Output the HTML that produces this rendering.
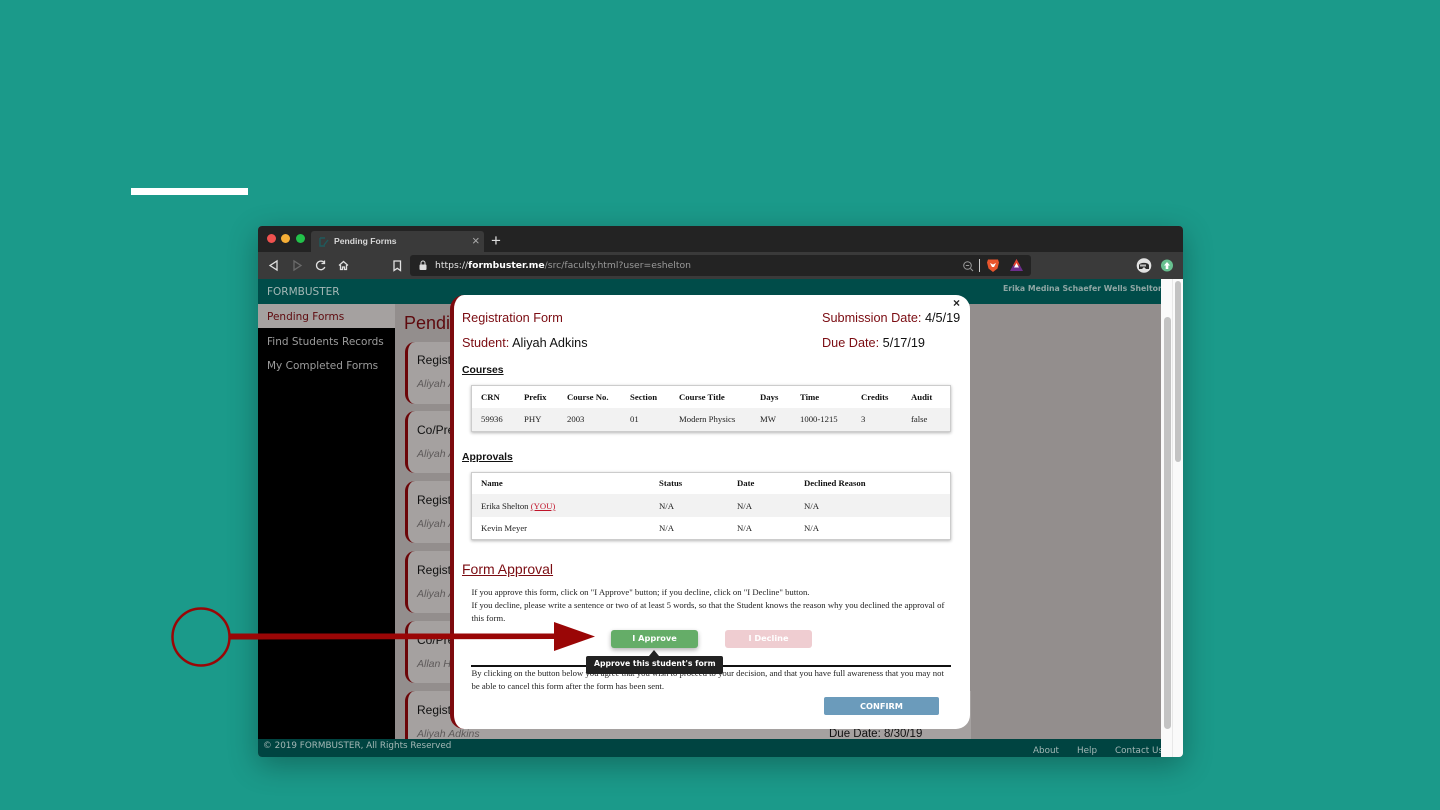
<!DOCTYPE html>
<html>
<head>
<meta charset="utf-8">
<style>
html,body{margin:0;padding:0;width:1440px;height:810px;overflow:hidden;background:#1b9a8a}
body{position:relative;font-family:"Liberation Sans",sans-serif}
.a{position:absolute;white-space:nowrap}
.dv{font-family:"DejaVu Sans",sans-serif}
.se{font-family:"Liberation Serif",serif;font-size:8.7px;color:#222}
.b{font-weight:bold;color:#111}
.m{color:#7b0c12}
.k{color:#111}
.card{position:absolute;left:405px;width:60px;height:62px;background:#a5a1a0;border-left:3px solid #6b0508;border-radius:10px 0 0 10px;box-sizing:border-box}
.h{font-size:12px;color:#111;left:417px}
.i{font-size:10.5px;font-style:italic;color:#5e5a5a;left:417px}
</style>
</head>
<body>
<div class="a" style="left:131px;top:188px;width:117px;height:7px;background:#fff"></div>

<!-- browser -->
<div class="a" style="left:258px;top:226px;width:925px;height:531px;background:#938e8d;border-radius:4px;box-shadow:0 8px 30px rgba(0,0,0,.3);overflow:hidden"></div>
<div class="a" style="left:258px;top:226px;width:925px;height:27px;background:#232323;border-radius:4px 4px 0 0"></div>
<div class="a" style="left:258px;top:252px;width:925px;height:27px;background:#3a3a3a"></div>
<div class="a" style="left:267px;top:234px;width:9px;height:9px;border-radius:50%;background:#f0524f"></div>
<div class="a" style="left:281px;top:234px;width:9px;height:9px;border-radius:50%;background:#f5ae36"></div>
<div class="a" style="left:296px;top:234px;width:9px;height:9px;border-radius:50%;background:#22c14a"></div>
<div class="a" style="left:311px;top:231px;width:173px;height:21px;background:#3a3a3a;border-radius:3px 3px 0 0"></div>
<svg class="a" style="left:318px;top:236px" width="12" height="12" viewBox="0 0 12 12"><path d="M2 2h5M2 2v8h5M6 9l4-5" stroke="#1f5a5c" stroke-width="1.4" fill="none"/></svg>
<div class="a" style="left:334px;top:236px;font-size:8.6px;font-weight:bold;color:#d8d8d8">Pending Forms</div>
<div class="a" style="left:472px;top:234px;font-size:13px;line-height:14px;color:#aaa">×</div>
<div class="a" style="left:491px;top:232px;font-size:17px;line-height:18px;color:#ddd">+</div>

<svg class="a" style="left:258px;top:252px" width="170" height="27" viewBox="0 0 170 27" fill="none" stroke="#e0e0e0" stroke-width="1.3">
<path d="M19 9v9l-7-4.500z"/>
<path d="M36 9v9l7-4.500z" stroke="#6a6a6a"/>
<path d="M66 10.500a4.300 4.300 0 1 0 .8 4.500M66.500 8.500v3h-3"/>
<path d="M81 13.500l4.500-4 4.500 4M82.500 13v4.500h2v-2.500h2v2.500h2V13"/>
<path d="M136 9h6.500v9.500l-3.250-2.200-3.250 2.200z"/>
</svg>

<div class="a" style="left:410px;top:255px;width:621px;height:21px;background:#232323;border-radius:3px"></div>
<svg class="a" style="left:418px;top:260px" width="10" height="11" viewBox="0 0 10 11"><rect x="1.500" y="4.500" width="7" height="5.500" rx="1" fill="#ddd"/><path d="M3 5V3a2 2 0 0 1 4 0v2" stroke="#ddd" fill="none"/></svg>
<div class="a dv" style="left:435px;top:260px;font-size:9.24px;color:#e6e6e6">https://<b style="color:#fff">formbuster.me</b><span style="color:#9a9a9a">/src/faculty.html?user=eshelton</span></div>
<svg class="a" style="left:961px;top:259px" width="14" height="14" viewBox="0 0 14 14" fill="none" stroke="#9a9a9a"><circle cx="6.500" cy="6.500" r="3.800"/><path d="M9.500 9.500l2.500 2.500M4.800 6.500h3.400"/></svg>
<div class="a" style="left:979px;top:259px;width:1px;height:13px;background:#ccc"></div>
<svg class="a" style="left:986px;top:258px" width="14" height="15" viewBox="0 0 14 15"><path d="M2 1.500h10l1 3-1.500 6L7 14 2.500 10.500 1 4.500z" fill="#e8552d"/><path d="M4 5l3 1.500L10 5 8 9H6z" fill="#fff"/></svg>
<svg class="a" style="left:1009px;top:258px" width="15" height="14" viewBox="0 0 15 14"><path d="M7.500 1L14 13H1z" fill="#6d2d8c"/><path d="M7.500 1l3.500 6.500H4z" fill="#e2452f"/><path d="M7.500 5l2.500 4.500H5z" fill="#fff"/></svg>
<svg class="a" style="left:1136px;top:258px" width="16" height="15" viewBox="0 0 16 15"><circle cx="8" cy="7.500" r="7.300" fill="#e2e2e2"/><path d="M3 7.500C3 4 13 4 13 7.500V11H10L8 9 6 11H3z" fill="#2c2c2c"/><rect x="4" y="6.500" width="6" height="2" fill="#bbb"/></svg>
<svg class="a" style="left:1161px;top:259px" width="12" height="13" viewBox="0 0 12 13"><circle cx="6" cy="6.500" r="6" fill="#67c08f"/><path d="M6 3L9 6.500H7.300V10H4.700V6.500H3z" fill="#fff"/></svg>

<!-- header -->
<div class="a" style="left:258px;top:279px;width:903px;height:25px;background:#004c49"></div>
<div class="a dv" style="left:267px;top:286px;font-size:10.5px;color:#a4b8b6">FORMBUSTER</div>
<div class="a dv" style="left:1003px;top:284px;width:158px;overflow:hidden;font-size:7.75px;font-weight:bold;color:#8fa6a4">Erika Medina Schaefer Wells Shelton</div>

<!-- sidebar -->
<div class="a" style="left:258px;top:304px;width:137px;height:435px;background:#000"></div>
<div class="a" style="left:258px;top:304px;width:137px;height:24px;background:#a5a1a0"></div>
<div class="a dv" style="left:267px;top:311px;font-size:10.5px;color:#5e0a0e">Pending Forms</div>
<div class="a dv" style="left:267px;top:336px;font-size:10.5px;color:#9c9c9c">Find Students Records</div>
<div class="a dv" style="left:267px;top:360px;font-size:10.5px;color:#9c9c9c">My Completed Forms</div>

<!-- content behind -->
<div class="a" style="left:404px;top:313px;font-size:18px;color:#5e0a0e">Pending</div>
<div class="card" style="top:342px"></div><div class="a h" style="top:353px">Registration</div><div class="a i" style="top:378px">Aliyah Adkins</div>
<div class="card" style="top:411px"></div><div class="a h" style="top:423px">Co/Prerequisite</div><div class="a i" style="top:448px">Aliyah Adkins</div>
<div class="card" style="top:481px"></div><div class="a h" style="top:493px">Registration</div><div class="a i" style="top:518px">Aliyah Adkins</div>
<div class="card" style="top:551px"></div><div class="a h" style="top:563px">Registration</div><div class="a i" style="top:588px">Aliyah Adkins</div>
<div class="card" style="top:621px"></div><div class="a h" style="top:633px">Co/Prerequisite</div><div class="a i" style="top:658px">Allan Hall</div>
<div class="a" style="left:405px;top:691px;width:60px;height:48px;background:#a5a1a0;border-left:3px solid #6b0508;border-radius:10px 0 0 0;box-sizing:border-box"></div>
<div class="a h" style="top:703px">Registration</div>
<div class="a" style="left:465px;top:691px;width:506px;height:48px;background:#a5a1a0"></div>
<div class="a i" style="top:728px">Aliyah Adkins</div>
<div class="a k" style="left:829px;top:728px;font-size:11.5px">Due Date: 8/30/19</div>

<!-- footer -->
<div class="a" style="left:258px;top:739px;width:903px;height:18px;background:#004441;border-radius:0 0 0 4px"></div>
<div class="a dv" style="left:263px;top:741px;font-size:8.800px;color:#a4b8b6">© 2019 FORMBUSTER, All Rights Reserved</div>
<div class="a dv" style="left:1033px;top:746px;font-size:8.800px;color:#a4b8b6">About</div>
<div class="a dv" style="left:1077px;top:746px;font-size:8.800px;color:#a4b8b6">Help</div>
<div class="a dv" style="left:1115px;top:746px;width:46px;overflow:hidden;font-size:8.800px;color:#a4b8b6">Contact Us</div>

<!-- scrollbars -->
<div class="a" style="left:1161px;top:279px;width:22px;height:478px;background:#fafafa;border-radius:0 0 4px 0"></div>
<div class="a" style="left:1172px;top:279px;width:1px;height:478px;background:#e8e8e8"></div>
<div class="a" style="left:1164px;top:317px;width:7px;height:412px;background:#c3c3c3;border-radius:4px"></div>
<div class="a" style="left:1175px;top:281px;width:6px;height:181px;background:#c3c3c3;border-radius:4px"></div>

<!-- modal -->
<div class="a" style="left:450px;top:295px;width:520px;height:434px;background:#fff;border-left:4px solid #7d0a0e;border-radius:14px;box-sizing:border-box"></div>
<div class="a" style="left:953px;top:297px;font-size:12px;line-height:13px;font-weight:bold;color:#222">×</div>
<div class="a m" style="left:462px;top:311px;font-size:12.7px">Registration Form</div>
<div class="a m" style="left:822px;top:311px;font-size:12.7px">Submission Date: <span class="k">4/5/19</span></div>
<div class="a m" style="left:462px;top:336px;font-size:12.7px">Student: <span class="k">Aliyah Adkins</span></div>
<div class="a m" style="left:822px;top:336px;font-size:12.7px">Due Date: <span class="k">5/17/19</span></div>

<div class="a k" style="left:462px;top:365px;font-size:10.4px;font-weight:bold;text-decoration:underline">Courses</div>
<div class="a" style="left:471px;top:385px;width:480px;height:47px;background:#fff;border:1px solid #ccc;box-sizing:border-box;box-shadow:0 1px 3px rgba(0,0,0,.3)"></div>
<div class="a" style="left:472px;top:408px;width:478px;height:23px;background:#f2f2f2"></div>
<div class="a se b" style="left:481px;top:392px">CRN</div>
<div class="a se b" style="left:524px;top:392px">Prefix</div>
<div class="a se b" style="left:567px;top:392px">Course No.</div>
<div class="a se b" style="left:630px;top:392px">Section</div>
<div class="a se b" style="left:679px;top:392px">Course Title</div>
<div class="a se b" style="left:760px;top:392px">Days</div>
<div class="a se b" style="left:800px;top:392px">Time</div>
<div class="a se b" style="left:861px;top:392px">Credits</div>
<div class="a se b" style="left:911px;top:392px">Audit</div>
<div class="a se" style="left:481px;top:414px">59936</div>
<div class="a se" style="left:524px;top:414px">PHY</div>
<div class="a se" style="left:567px;top:414px">2003</div>
<div class="a se" style="left:630px;top:414px">01</div>
<div class="a se" style="left:679px;top:414px">Modern Physics</div>
<div class="a se" style="left:760px;top:414px">MW</div>
<div class="a se" style="left:800px;top:414px">1000-1215</div>
<div class="a se" style="left:861px;top:414px">3</div>
<div class="a se" style="left:911px;top:414px">false</div>

<div class="a k" style="left:462px;top:452px;font-size:10.4px;font-weight:bold;text-decoration:underline">Approvals</div>
<div class="a" style="left:471px;top:472px;width:480px;height:68px;background:#fff;border:1px solid #ccc;box-sizing:border-box;box-shadow:0 1px 3px rgba(0,0,0,.3)"></div>
<div class="a" style="left:472px;top:494px;width:478px;height:23px;background:#f2f2f2"></div>
<div class="a se b" style="left:481px;top:478px">Name</div>
<div class="a se b" style="left:659px;top:478px">Status</div>
<div class="a se b" style="left:737px;top:478px">Date</div>
<div class="a se b" style="left:804px;top:478px">Declined Reason</div>
<div class="a se" style="left:481px;top:501px">Erika Shelton <span style="color:#c0142a;text-decoration:underline">(YOU)</span></div>
<div class="a se" style="left:659px;top:501px">N/A</div>
<div class="a se" style="left:737px;top:501px">N/A</div>
<div class="a se" style="left:804px;top:501px">N/A</div>
<div class="a se" style="left:481px;top:523px">Kevin Meyer</div>
<div class="a se" style="left:659px;top:523px">N/A</div>
<div class="a se" style="left:737px;top:523px">N/A</div>
<div class="a se" style="left:804px;top:523px">N/A</div>

<div class="a m" style="left:462px;top:561px;font-size:14px;text-decoration:underline">Form Approval</div>
<div class="a se" style="left:471.500px;top:587px">If you approve this form, click on "I Approve" button; if you decline, click on "I Decline" button.</div>
<div class="a se" style="left:471.500px;top:600px">If you decline, please write a sentence or two of at least 5 words, so that the Student knows the reason why you declined the approval of</div>
<div class="a se" style="left:471.500px;top:613px">this form.</div>

<div class="a dv" style="left:611px;top:630px;width:87px;height:18px;line-height:17px;background:#65ad68;border-radius:3px;text-align:center;color:#fff;font-size:8.2px;font-weight:bold;box-shadow:0 2px 5px rgba(0,0,0,.3)">I Approve</div>
<div class="a dv" style="left:725px;top:630px;width:87px;height:18px;line-height:17px;background:#efcdd1;border-radius:3px;text-align:center;color:#fff;font-size:8.2px;font-weight:bold">I Decline</div>

<div class="a" style="left:471px;top:665px;width:480px;height:2px;background:#111"></div>
<div class="a se" style="left:471.500px;top:668px">By clicking on the button below you agree that you wish to proceed to your decision, and that you have full awareness that you may not</div>
<div class="a se" style="left:471.500px;top:681px">be able to cancel this form after the form has been sent.</div>
<div class="a dv" style="left:824px;top:697px;width:115px;height:18px;line-height:18px;background:#6b9bbb;border-radius:2px;text-align:center;color:#fff;font-size:8.2px;font-weight:bold">CONFIRM</div>

<!-- tooltip -->
<div class="a" style="left:586px;top:656px;width:137px;height:18px;background:#222;border-radius:2px"></div>
<div class="a" style="left:649px;top:650px;width:0;height:0;border-left:5px solid transparent;border-right:5px solid transparent;border-bottom:6px solid #222"></div>
<div class="a dv" style="left:594px;top:659px;font-size:7.7px;font-weight:bold;color:#fff">Approve this student's form</div>

<!-- annotation -->
<svg class="a" style="left:170px;top:605px" width="430" height="64" viewBox="0 0 430 64">
<circle cx="31" cy="32" r="28.500" fill="none" stroke="#9a0606" stroke-width="2.500"/>
<path d="M60 28.500L384 28.500V34L60 34.500z" fill="#9a0606"/>
<path d="M384 17L425 31.500 384 46z" fill="#9a0606"/>
</svg>
</body>
</html>
